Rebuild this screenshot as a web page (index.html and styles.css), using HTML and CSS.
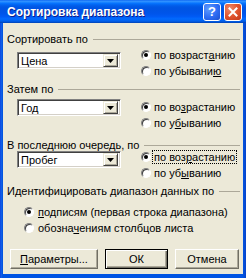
FILE: index.html
```html
<!DOCTYPE html>
<html lang="ru">
<head>
    <meta charset="UTF-8">
    <title>Сортировка диапазона</title>
    <link rel="stylesheet" href="styles.css">
</head>
<body>
    <div class="window">
        <div class="titlebar">
            <span class="title">Сортировка диапазона</span>
            <div class="title-buttons">
                <span class="tb-btn tb-help">?</span>
                <span class="tb-btn tb-close">
                    <svg width="10" height="10" viewBox="0 0 10 10">
                        <path d="M1.5 1.5 L8.5 8.5 M8.5 1.5 L1.5 8.5" stroke="#fff" stroke-width="2" stroke-linecap="square"/>
                    </svg>
                </span>
            </div>
        </div>

        <div class="content">
            <!-- Сортировать по -->
            <div class="group group-first">
                <div class="legend">Сортировать по</div>
                <div class="group-row">
                    <div class="combo">
                        <span class="combo-text">Цена</span>
                        <span class="combo-arrow">
                            <svg width="7" height="4" viewBox="0 0 7 4"><path d="M0 0 H7 L3.5 4 Z" fill="#000"/></svg>
                        </span>
                    </div>
                    <div class="radios">
                        <div class="radio checked"><span class="radio-mark"></span><span>по возраст<u>а</u>нию</span></div>
                        <div class="radio"><span class="radio-mark"></span><span>по убывани<u>ю</u></span></div>
                    </div>
                </div>
            </div>

            <!-- Затем по -->
            <div class="group group-second">
                <div class="legend">Затем по</div>
                <div class="group-row">
                    <div class="combo">
                        <span class="combo-text">Год</span>
                        <span class="combo-arrow">
                            <svg width="7" height="4" viewBox="0 0 7 4"><path d="M0 0 H7 L3.5 4 Z" fill="#000"/></svg>
                        </span>
                    </div>
                    <div class="radios">
                        <div class="radio checked"><span class="radio-mark"></span><span>по во<u>з</u>растанию</span></div>
                        <div class="radio"><span class="radio-mark"></span><span>по у<u>б</u>ыванию</span></div>
                    </div>
                </div>
            </div>

            <!-- В последнюю очередь, по -->
            <div class="group group-third">
                <div class="legend">В последнюю очередь, по</div>
                <div class="group-row">
                    <div class="combo">
                        <span class="combo-text">Пробег</span>
                        <span class="combo-arrow">
                            <svg width="7" height="4" viewBox="0 0 7 4"><path d="M0 0 H7 L3.5 4 Z" fill="#000"/></svg>
                        </span>
                    </div>
                    <div class="radios">
                        <div class="radio checked"><span class="radio-mark"></span><span class="focused">по воз<u>р</u>астанию</span></div>
                        <div class="radio"><span class="radio-mark"></span><span>по уб<u>ы</u>ванию</span></div>
                    </div>
                </div>
            </div>

            <!-- Идентифицировать диапазон данных по -->
            <div class="group group-fourth">
                <div class="legend">Идентифицировать диапазон данных по</div>
                <div class="radios radios-wide">
                    <div class="radio checked"><span class="radio-mark"></span><span><u>п</u>одписям (первая строка диапазона)</span></div>
                    <div class="radio"><span class="radio-mark"></span><span>обозна<u>ч</u>ениям столбцов листа</span></div>
                </div>
            </div>

            <div class="buttons">
                <button class="btn btn-params"><u>П</u>араметры...</button>
                <button class="btn btn-default">ОК</button>
                <button class="btn">Отмена</button>
            </div>
        </div>
    </div>
</body>
</html>
```

FILE: styles.css
```css
* {
    margin: 0;
    padding: 0;
    box-sizing: border-box;
}

body {
    font-family: 'Liberation Sans', Arial, sans-serif;
    font-size: 11px;
    color: #000;
    background: #fff;
}

.window {
    width: 246px;
    height: 278px;
    display: flex;
    flex-direction: column;
    background: linear-gradient(to right, #0831d9 0, #166aee 1px, #0855dd 2px, #0054e3 3px, #0054e3 243px, #0843c8 246px);
}

/* title bar */
.titlebar {
    height: 23px;
    flex-shrink: 0;
    display: flex;
    align-items: center;
    justify-content: space-between;
    padding: 0 4px 0 7px;
    background: linear-gradient(to bottom, #0058ee 0%, #3593ff 4%, #288eff 8%, #127dff 12%, #036ffc 16%, #0262ee 22%, #0057e5 30%, #0054e3 40%, #0055eb 60%, #005bf5 72%, #026afe 82%, #0062ef 90%, #0052d6 96%, #0040ab 100%);
}

.title {
    color: #fff;
    font-weight: bold;
    font-size: 12px;
    text-shadow: 1px 1px #0f1f8a;
}

.title-buttons {
    display: flex;
    gap: 3px;
}

.tb-btn {
    width: 18px;
    height: 18px;
    border: 1px solid #fff;
    border-radius: 3px;
    display: flex;
    align-items: center;
    justify-content: center;
    color: #fff;
    font-weight: bold;
    font-size: 13px;
}

.tb-help {
    background: radial-gradient(circle at 30% 30%, #5f9cff 0%, #2d6cf3 55%, #1b4fd0 100%);
}

.tb-close {
    background: radial-gradient(circle at 30% 30%, #f08a6a 0%, #e0542e 50%, #c2381b 100%);
}

/* dialog body */
.content {
    flex: 1;
    margin: 0 3px 4px;
    padding: 10px 3px 0 4px;
    background: #ece9d8;
}

.legend {
    display: flex;
    align-items: center;
    height: 12px;
    line-height: 12px;
    white-space: nowrap;
}

.legend::after {
    content: "";
    flex: 1;
    margin-left: 5px;
    border-top: 1px solid #aca899;
}

.group-row {
    display: flex;
    align-items: flex-start;
    padding-left: 10px;
}

.group-second {
    margin-top: 4px;
}

.group-third {
    margin-top: 8px;
}

.group-fourth {
    margin-top: 4px;
}

.group-first .combo {
    margin-top: 7px;
}

.group-first .radios {
    margin-top: 2px;
}

.group-second .combo,
.group-second .radios {
    margin-top: 4px;
}

.group-third .radios {
    margin-top: -2px;
}

/* combo box */
.combo {
    width: 104px;
    height: 17px;
    display: flex;
    align-items: center;
    justify-content: space-between;
    padding: 2px;
    background: #fff;
    border: 1px solid;
    border-color: #808080 #fff #fff #808080;
    box-shadow: inset 1px 1px #404040, inset -1px -1px #d4d0c8;
}

.combo-text {
    padding-left: 1px;
}

.combo-arrow {
    width: 15px;
    height: 13px;
    display: flex;
    align-items: center;
    justify-content: center;
    background: #ece9d8;
    border: 1px solid;
    border-color: #ece9d8 #404040 #404040 #ece9d8;
    box-shadow: inset 1px 1px #fff, inset -1px -1px #aca899;
}

/* radio buttons */
.radios {
    margin-left: 20px;
}

.radios-wide {
    margin-left: 17px;
    margin-top: 7px;
}

.radio {
    display: flex;
    align-items: center;
    gap: 3px;
    height: 16px;
    white-space: nowrap;
}

.radios-wide .radio {
    gap: 4px;
}

.radio-mark {
    position: relative;
    width: 10px;
    height: 10px;
    border-radius: 50%;
    border: 1px solid;
    border-color: #808080 #fff #fff #808080;
    background: #fff;
    box-shadow: inset 1px 1px #404040;
}

.radio.checked .radio-mark::after {
    content: "";
    position: absolute;
    left: 2px;
    top: 2px;
    width: 4px;
    height: 4px;
    border-radius: 50%;
    background: #000;
}

.focused {
    outline: 1px dotted #000;
    padding: 0 1px;
    margin-left: -1px;
}

/* buttons */
.buttons {
    display: flex;
    gap: 7px;
    margin-top: 13px;
    padding-left: 3px;
}

.btn {
    width: 64px;
    height: 20px;
    font-family: inherit;
    font-size: 11px;
    color: #000;
    background: #ece9d8;
    border: 1px solid;
    border-color: #fff #716f64 #716f64 #fff;
    box-shadow: inset -1px -1px #aca899;
}

.btn-params {
    width: 88px;
}

.btn-default {
    width: 63px;
    border: 1px solid #000;
    box-shadow: inset 1px 1px #fff, inset -1px -1px #716f64, inset -2px -2px #aca899;
}
```
